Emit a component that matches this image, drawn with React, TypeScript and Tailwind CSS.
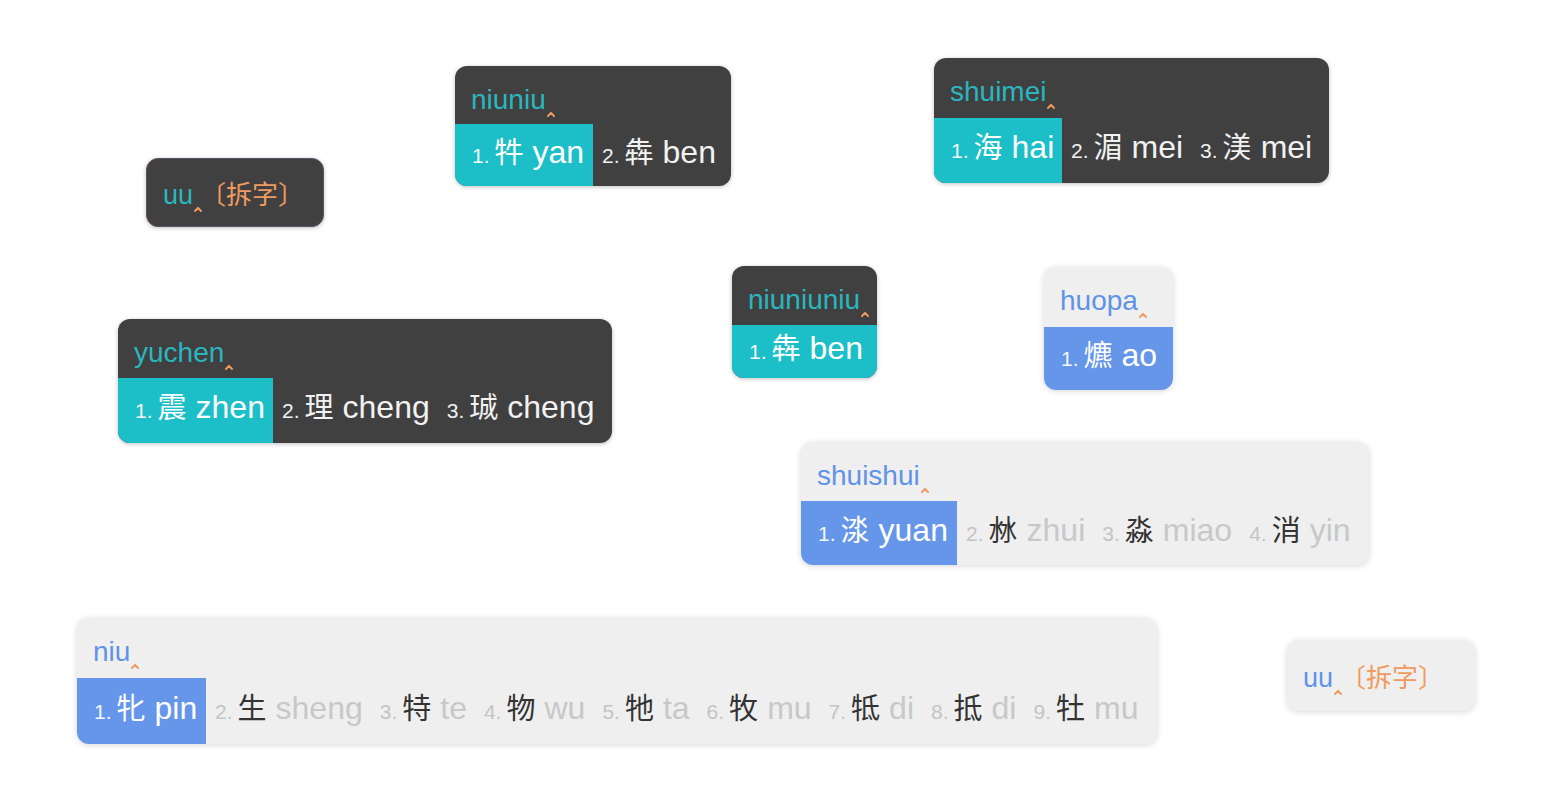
import React from "react";

type Cand = { n: string; c: string; p: string };

type Win = {
  pos: string;
  pre: string;
  cand: string;
  hl: string;
  text: string;
  cands: Cand[];
  dark: boolean;
};

const LATIN = '[font-family:"Liberation_Sans",Arial,"Noto_Sans_CJK_SC",sans-serif]';
const CJK = '[font-family:"Noto_Sans_CJK_SC","Liberation_Sans",sans-serif]';

function Caret() {
  return (
    <svg width="8" height="6" viewBox="0 0 8 6" className="inline-block ml-[1px] align-[-8px]">
      <path d="M1 5 L4 1.8 L7 5" fill="none" stroke="#ef9a60" strokeWidth="1.9" strokeLinecap="round" strokeLinejoin="round" />
    </svg>
  );
}

const wins: Win[] = [
  {
    pos: "left-[455px] top-[66px] w-[276px]", pre: "h-[58px]", cand: "h-[62px]", hl: "w-[138px]", text: "niuniu", dark: true,
    cands: [
      { n: "1.", c: "牪", p: "yan" },
      { n: "2.", c: "犇", p: "ben" },
    ],
  },
  {
    pos: "left-[934px] top-[58px] w-[395px]", pre: "h-[60px]", cand: "h-[65px]", hl: "w-[128px]", text: "shuimei", dark: true,
    cands: [
      { n: "1.", c: "海", p: "hai" },
      { n: "2.", c: "湄", p: "mei" },
      { n: "3.", c: "渼", p: "mei" },
    ],
  },
  {
    pos: "left-[118px] top-[319px] w-[494px]", pre: "h-[59px]", cand: "h-[65px]", hl: "w-[155px]", text: "yuchen", dark: true,
    cands: [
      { n: "1.", c: "震", p: "zhen" },
      { n: "2.", c: "理", p: "cheng" },
      { n: "3.", c: "珹", p: "cheng" },
    ],
  },
  {
    pos: "left-[732px] top-[266px] w-[145px]", pre: "h-[59px]", cand: "h-[53px]", hl: "w-[145px]", text: "niuniuniu", dark: true,
    cands: [{ n: "1.", c: "犇", p: "ben" }],
  },
  {
    pos: "left-[1044px] top-[267px] w-[129px]", pre: "h-[60px]", cand: "h-[63px]", hl: "w-[129px]", text: "huopa", dark: false,
    cands: [{ n: "1.", c: "爊", p: "ao" }],
  },
  {
    pos: "left-[801px] top-[442px] w-[568px]", pre: "h-[59px]", cand: "h-[64px]", hl: "w-[156px]", text: "shuishui", dark: false,
    cands: [
      { n: "1.", c: "渁", p: "yuan" },
      { n: "2.", c: "沝", p: "zhui" },
      { n: "3.", c: "淼", p: "miao" },
      { n: "4.", c: "消", p: "yin" },
    ],
  },
  {
    pos: "left-[77px] top-[618px] w-[1080px]", pre: "h-[60px]", cand: "h-[66px]", hl: "w-[129px]", text: "niu", dark: false,
    cands: [
      { n: "1.", c: "牝", p: "pin" },
      { n: "2.", c: "生", p: "sheng" },
      { n: "3.", c: "特", p: "te" },
      { n: "4.", c: "物", p: "wu" },
      { n: "5.", c: "牠", p: "ta" },
      { n: "6.", c: "牧", p: "mu" },
      { n: "7.", c: "牴", p: "di" },
      { n: "8.", c: "抵", p: "di" },
      { n: "9.", c: "牡", p: "mu" },
    ],
  },
];

function Window({ w }: { w: Win }) {
  const dark = w.dark;
  return (
    <div
      className={
        "absolute flex flex-col overflow-hidden rounded-[12px] " +
        w.pos +
        " " +
        (dark
          ? "bg-[#404040] shadow-[0_1px_4px_rgba(0,0,0,0.25)]"
          : "bg-[#efefef] shadow-[0_1px_6px_rgba(0,0,0,0.16)]")
      }
    >
      <div className={"flex items-start pl-[16px] " + w.pre}>
        <span
          className={
            "text-[28px] leading-none mt-[20px] whitespace-nowrap " +
            LATIN +
            " " +
            (dark ? "text-[#2ab6be]" : "text-[#5f93e8]")
          }
        >
          {w.text}
          <Caret />
        </span>
      </div>
      <div className={"flex items-stretch " + w.cand}>
        {w.cands.map((c, i) => {
          const hl = i === 0;
          return (
            <div
              key={i}
              className={
                "flex items-center whitespace-nowrap pb-[7px] " +
                (hl
                  ? (dark ? "bg-[#1cbfc7] " : "bg-[#6596ea] ") + "pl-[17px] pr-[8px] " + w.hl
                  : "pl-[9px] pr-[8px]")
              }
            >
              <span className="flex items-baseline leading-none">
                <span
                  className={
                    "text-[21px] mr-[5px] " +
                    LATIN +
                    " " +
                    (hl ? "text-[#f4f8fc]" : dark ? "text-[#f2f2f2]" : "text-[#c4c4c4]")
                  }
                >
                  {c.n}
                </span>
                <span
                  className={
                    "text-[29px] " + CJK + " " + (hl ? "text-white" : dark ? "text-[#f2f2f2]" : "text-[#333333]")
                  }
                >
                  {c.c}
                </span>
                <span
                  className={
                    "text-[32px] ml-[9px] " +
                    LATIN +
                    " " +
                    (hl ? "text-white" : dark ? "text-[#f2f2f2]" : "text-[#c8c8c8]")
                  }
                >
                  {c.p}
                </span>
              </span>
            </div>
          );
        })}
      </div>
    </div>
  );
}

function Small({ pos, dark }: { pos: string; dark: boolean }) {
  return (
    <div
      className={
        "absolute flex items-center pl-[16px] rounded-[12px] " +
        pos +
        " " +
        (dark
          ? "bg-[#404040] border border-[#5e5068] shadow-[0_1px_4px_rgba(0,0,0,0.25)]"
          : "bg-[#efefef] shadow-[0_1px_6px_rgba(0,0,0,0.16)]")
      }
    >
      <span className="flex items-baseline leading-none whitespace-nowrap mt-[6px]">
        <span className={"text-[27px] " + LATIN + " " + (dark ? "text-[#2ab6be]" : "text-[#5f93e8]")}>
          uu
          <Caret />
        </span>
        <span className={"text-[26px] text-[#ef9a60] -ml-[2px] " + CJK}>〔拆字〕</span>
      </span>
    </div>
  );
}

export default function App() {
  return (
    <div className="relative w-[1568px] h-[808px] bg-white overflow-hidden">
      <Small pos="left-[146px] top-[158px] w-[178px] h-[69px]" dark={true} />
      {wins.map((w, i) => (
        <Window key={i} w={w} />
      ))}
      <Small pos="left-[1287px] top-[640px] w-[188px] h-[71px]" dark={false} />
    </div>
  );
}
